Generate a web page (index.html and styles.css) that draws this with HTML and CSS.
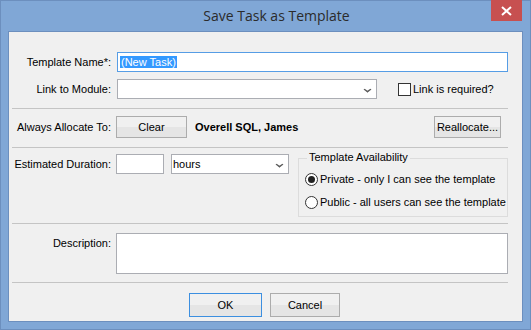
FILE: index.html
```html
<!DOCTYPE html>
<html>
<head>
    <link rel="stylesheet" href="styles.css">
</head>
<body>
    <div class="window">
        <!-- Заголовок окна -->
        <div class="titlebar">
            <span class="title">Save Task as Template</span>
            <span class="close">
                <svg width="11" height="10" viewBox="0 0 11 10"><path d="M1 1 L10 9 M10 1 L1 9" stroke="#fff" stroke-width="2"/></svg>
            </span>
        </div>

        <div class="client">
            <div class="section first">
                <div class="row">
                    <label class="caption">Template Name*:</label>
                    <div class="textbox focused name"><span class="selected">(New Task)</span></div>
                </div>
                <div class="row">
                    <label class="caption">Link to Module:</label>
                    <div class="combo module"><span class="arrow"></span></div>
                    <span class="check"></span>
                    <span class="check-text">Link is required?</span>
                </div>
            </div>

            <div class="section alloc">
                <div class="row">
                    <label class="caption">Always Allocate To:</label>
                    <button class="btn clear">Clear</button>
                    <span class="owner">Overell SQL, James</span>
                    <button class="btn realloc">Reallocate...</button>
                </div>
            </div>

            <div class="section duration">
                <div class="row top">
                    <label class="caption">Estimated Duration:</label>
                    <div class="textbox hours-box"></div>
                    <div class="combo units"><span class="value">hours</span><span class="arrow"></span></div>
                    <div class="group">
                        <span class="legend">Template Availability</span>
                        <div class="radio-row"><span class="radio on"></span>Private - only I can see the template</div>
                        <div class="radio-row"><span class="radio"></span>Public - all users can see the template</div>
                    </div>
                </div>
            </div>

            <div class="section desc">
                <div class="row top">
                    <label class="caption">Description:</label>
                    <div class="textbox memo"></div>
                </div>
            </div>

            <div class="footer">
                <button class="btn default">OK</button>
                <button class="btn cancel">Cancel</button>
            </div>
        </div>
    </div>
</body>
</html>
```

FILE: styles.css
```css
body {
  margin: 0;
  font-family: "Liberation Sans", Arial, sans-serif;
  font-size: 11px;
  color: #000;
}

.window {
  width: 531px;
  height: 330px;
  box-sizing: border-box;
  background-color: #80a7d6;
  border: 1px solid #6c8fbe;
  padding: 0 7px 7px 7px;
  display: flex;
  flex-direction: column;
}

.titlebar {
  height: 30px;
  position: relative;
  display: flex;
  align-items: center;
  justify-content: center;
  padding-left: 22px;
}

.title {
  font-family: "Open Sans", sans-serif;
  font-size: 14px;
  color: #2b2b2b;
  margin-top: -1px;
}

.close {
  position: absolute;
  right: 1px;
  top: -1px;
  width: 31px;
  height: 21px;
  background-color: #c75050;
  display: flex;
  align-items: center;
  justify-content: center;
}

.client {
  flex: 1;
  background-color: #f0f0f0;
  border: 1px solid #6c8fbe;
  padding: 0 14px 0 3px;
}

.section {
  border-bottom: 1px solid #c4c4c4;
}

.section.first {
  padding: 20px 0 9px;
}

.section.first .row + .row {
  margin-top: 7px;
}

.section.alloc {
  padding: 7px 0 9px;
}

.section.alloc .row {
  height: 22px;
}

.section.duration {
  padding: 6px 0 6px;
}

.section.desc {
  padding: 9px 0 8px;
}

.row {
  display: flex;
  align-items: center;
  height: 20px;
}

.row.top {
  align-items: flex-start;
  height: auto;
}

.caption {
  width: 99px;
  text-align: right;
  margin-right: 5px;
  flex: none;
  white-space: nowrap;
}

.row.top .caption {
  line-height: 20px;
}

.textbox, .combo {
  box-sizing: border-box;
  height: 20px;
  background-color: #fff;
  border: 1px solid #abadb3;
  position: relative;
  flex: none;
}

.textbox.name {
  flex: 1;
  margin-left: 1px;
  padding: 2px 2px;
  line-height: 14px;
}

.focused {
  border-color: #569de5;
}

.selected {
  background-color: #3399ff;
  color: #fff;
  padding: 0 1px;
}

.combo.module {
  width: 260px;
  margin-left: 1px;
}

.arrow {
  position: absolute;
  right: 5px;
  top: 6px;
  width: 5px;
  height: 5px;
  border-right: 2px solid #5a5a5a;
  border-bottom: 2px solid #5a5a5a;
  transform: scale(0.8, 0.6) rotate(45deg);
}

.check {
  width: 11px;
  height: 11px;
  border: 1px solid #333;
  background-color: #fff;
  margin-left: 21px;
  margin-right: 2px;
  flex: none;
}

.btn {
  font-family: inherit;
  font-size: 11px;
  color: #000;
  height: 22px;
  border: 1px solid #acacac;
  background: linear-gradient(#f0f0f0 50%, #e5e5e5 50%);
  padding: 0;
  flex: none;
}

.btn.clear {
  width: 71px;
}

.owner {
  font-weight: bold;
  margin-left: 8px;
  flex: 1;
}

.btn.realloc {
  width: 67px;
  margin-right: 7px;
}

.hours-box {
  width: 48px;
}

.combo.units {
  width: 118px;
  margin-left: 7px;
}

.combo .value {
  display: block;
  padding: 2px 1px;
  line-height: 14px;
}

.group {
  flex: 1;
  box-sizing: border-box;
  height: 59px;
  margin: 4px 0 0 9px;
  border: 1px solid #dcdcdc;
  position: relative;
  padding: 12px 0 0 6px;
  white-space: nowrap;
}

.legend {
  position: absolute;
  top: -8px;
  left: 8px;
  padding: 0 2px;
  background-color: #f0f0f0;
}

.radio-row {
  display: flex;
  align-items: center;
  height: 16px;
  margin-bottom: 7px;
}

.radio {
  box-sizing: border-box;
  width: 13px;
  height: 13px;
  border: 1px solid #333;
  border-radius: 50%;
  background-color: #fff;
  margin-right: 2px;
  position: relative;
  flex: none;
}

.radio.on::after {
  content: "";
  position: absolute;
  left: 2px;
  top: 2px;
  width: 7px;
  height: 7px;
  border-radius: 50%;
  background-color: #222;
}

.memo {
  flex: 1;
  height: 41px;
}

.footer {
  display: flex;
  justify-content: center;
  gap: 8px;
  padding: 10px 0 0 9px;
}

.footer .btn {
  height: 24px;
}

.btn.default {
  width: 73px;
  border-color: #3c8fe0;
}

.btn.cancel {
  width: 70px;
}
```
